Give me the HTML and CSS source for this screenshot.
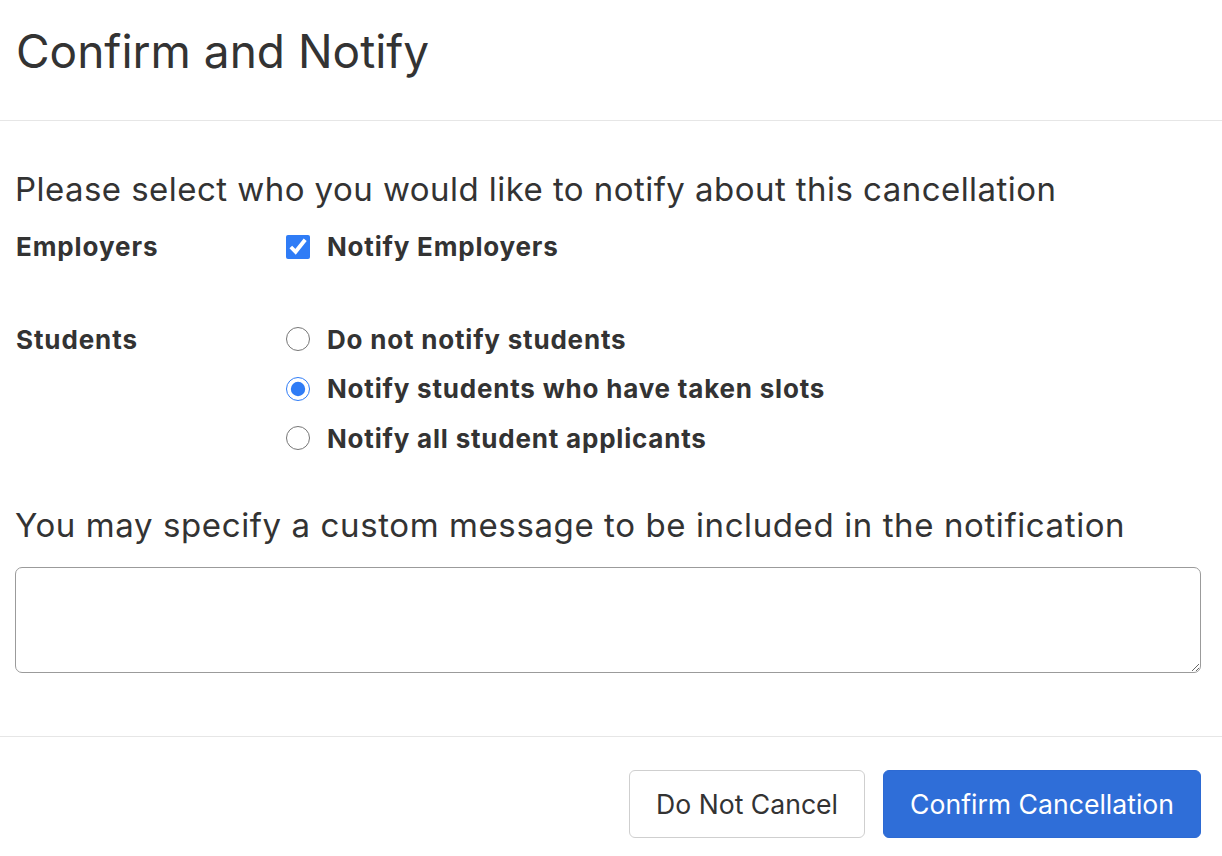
FILE: index.html
```html
<!DOCTYPE html>
<html lang="en">
<head>
<meta charset="utf-8">
<title>Confirm and Notify</title>
<link rel="stylesheet" href="styles.css">
</head>
<body>
<div class="modal">
  <div class="modal-header">
    <h1 class="modal-title">Confirm and Notify</h1>
  </div>
  <div class="modal-body">
    <p class="lead">Please select who you would like to notify about this cancellation</p>
    <div class="field-row row-employers">
      <div class="field-label">Employers</div>
      <div class="field-options">
        <label class="option"><input type="checkbox" checked><span>Notify Employers</span></label>
      </div>
    </div>
    <div class="field-row row-students">
      <div class="field-label">Students</div>
      <div class="field-options">
        <label class="option"><input type="radio" name="students"><span>Do not notify students</span></label>
        <label class="option"><input type="radio" name="students" checked><span>Notify students who have taken slots</span></label>
        <label class="option"><input type="radio" name="students"><span>Notify all student applicants</span></label>
      </div>
    </div>
    <p class="lead lead-message">You may specify a custom message to be included in the notification</p>
    <textarea class="message"></textarea>
  </div>
  <div class="modal-footer">
    <button class="btn btn-default">Do Not Cancel</button>
    <button class="btn btn-primary">Confirm Cancellation</button>
  </div>
</div>
</body>
</html>
```
FILE: styles.css
```css
* { box-sizing: border-box; }
html, body { margin: 0; padding: 0; background: #fff; }
body {
  font-family: Inter, "Noto Sans", "Liberation Sans", sans-serif;
  color: #333;
}
.modal { width: 1222px; }
.modal-header {
  height: 121px;
  padding: 21px 16px 0 16px;
  border-bottom: 1px solid #e6e6e6;
}
.modal-title {
  margin: 0;
  font-size: 46px;
  font-weight: 400;
  line-height: 60px;
}
.modal-body {
  padding: 0 21px 0 15px;
}
.lead {
  margin: 0;
  font-size: 33px;
  line-height: 40px;
  letter-spacing: 0.45px;
}
.modal-body > .lead:first-child { padding-top: 48px; }
.lead-message { letter-spacing: 0.6px; }
.field-row {
  display: flex;
  align-items: flex-start;
}
.field-label {
  width: 271px;
  font-size: 26px;
  font-weight: 700;
  line-height: 49px;
  letter-spacing: 0.9px;
  padding-left: 1px;
}
.field-options {
  display: flex;
  flex-direction: column;
}
.option {
  display: flex;
  align-items: center;
  height: 49.5px;
  font-size: 26px;
  font-weight: 700;
  letter-spacing: 0.8px;
}
.option input {
  width: 24px;
  height: 24px;
  margin: 0 17px 0 0;
  accent-color: #2f7cf6;
}
.row-employers { margin-top: 13px; }
.row-students { margin-top: 43px; }
.lead-message { margin-top: 42px; }
.message {
  display: block;
  width: 100%;
  height: 106px;
  margin-top: 22px;
  border: 1px solid #9b9b9b;
  border-radius: 7px;
  font-family: inherit;
  font-size: 23px;
  resize: vertical;
}
.modal-footer {
  margin-top: 63px;
  border-top: 1px solid #e6e6e6;
  padding: 33px 21px 0 0;
  display: flex;
  justify-content: flex-end;
  gap: 18px;
}
.btn {
  height: 68px;
  border-radius: 6px;
  font-family: inherit;
  font-size: 26.6px;
  padding: 0 26px;
  cursor: pointer;
}
.btn-default {
  background: #fff;
  border: 1px solid #cfcfcf;
  color: #333;
}
.btn-primary {
  background: #2f6ed8;
  border: 1px solid #2d6ad3;
  color: #fff;
}
```
